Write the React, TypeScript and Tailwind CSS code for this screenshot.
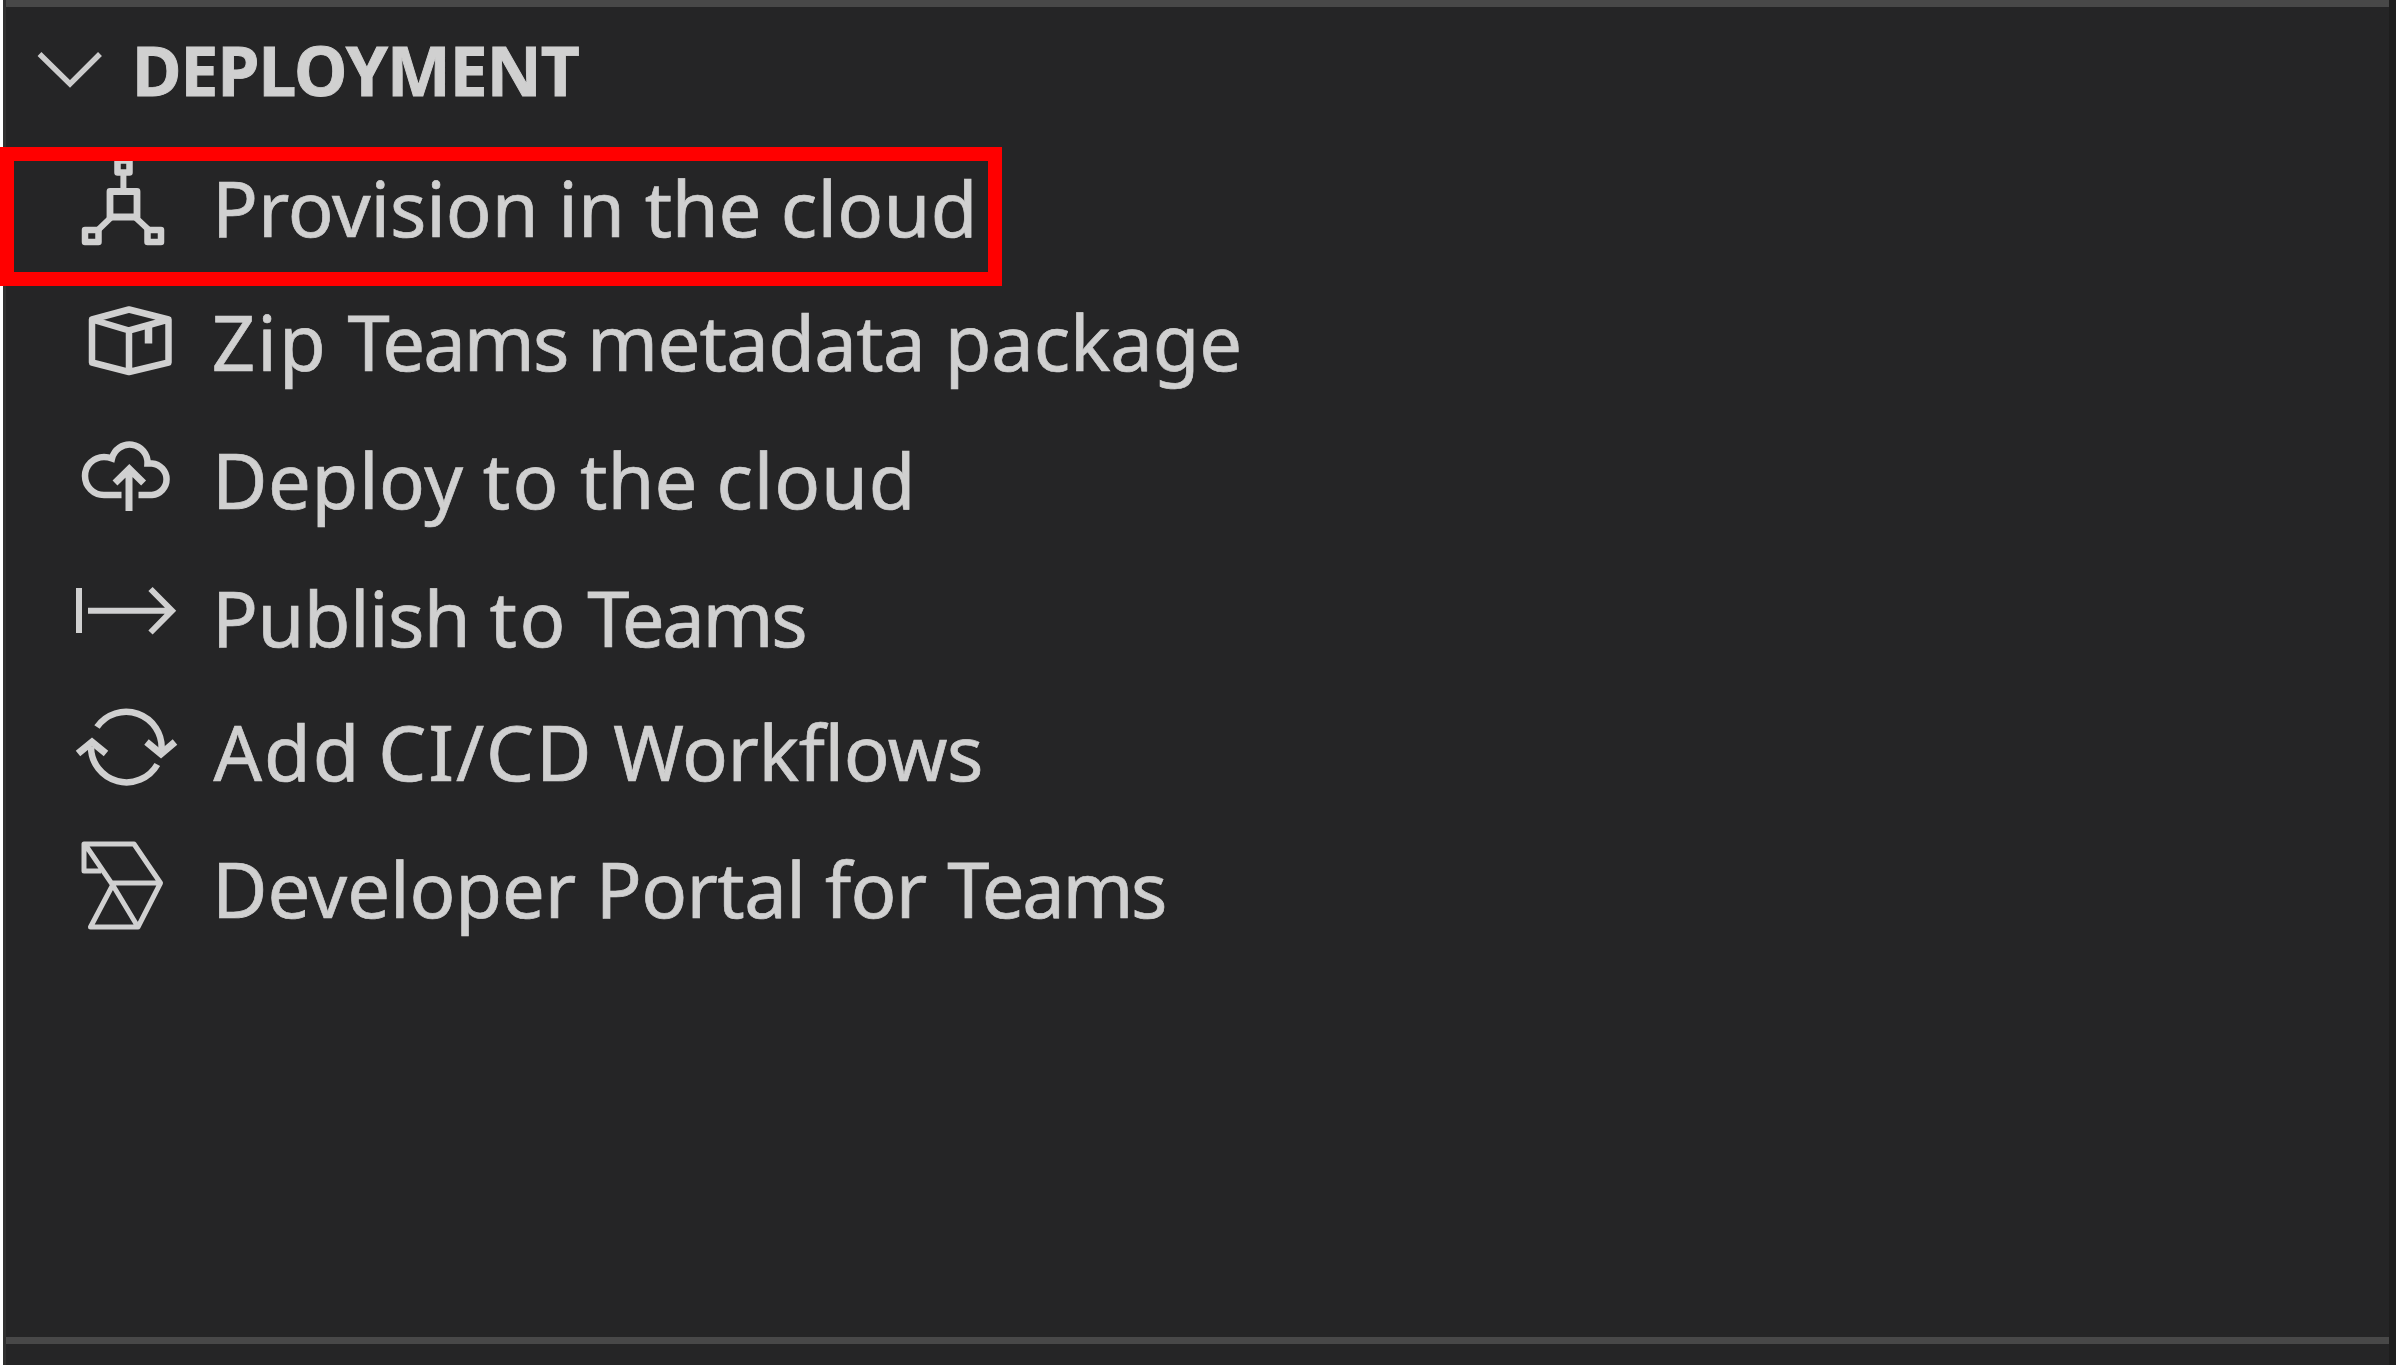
import { ReactNode } from "react";

type Word = { text: string; tracking?: string };

type Action = {
  words: Word[];
  height: string;
  spacing: string;
  viewBox: string;
  icon: ReactNode;
};

const actions: Action[] = [
  {
    words: [
      { text: "Provision", tracking: "tracking-[-0.1px]" },
      { text: "in" },
      { text: "the", tracking: "tracking-[-0.3px]" },
      { text: "cloud", tracking: "tracking-[0.2px]" },
    ],
    height: "h-[134px]",
    spacing: "ml-[22px]",
    viewBox: "60 141 130 133",
    icon: (
      <>
        <path
          strokeWidth="6.5"
          strokeLinejoin="round"
          d="M117.5 160.5h12v12h-12zM85 230h13.5v12H85zM147.5 230H161v12h-13.5z"
        />
        <path strokeWidth="6.8" strokeLinejoin="round" d="M110 191.5h27V217h-27z" />
        <path strokeWidth="6" d="M123.4 174v16M111.5 217 97 231M135 217l15 14" />
      </>
    ),
  },
  {
    words: [
      { text: "Zip", tracking: "tracking-[2px]" },
      { text: "Teams", tracking: "tracking-[-2px]" },
      { text: "metadata", tracking: "tracking-[-0.7px]" },
      { text: "package", tracking: "tracking-[-0.2px]" },
    ],
    height: "h-[138px]",
    spacing: "ml-[21.8px]",
    viewBox: "60 275 130 133",
    icon: (
      <>
        <path
          strokeWidth="6.5"
          strokeLinejoin="round"
          d="M129 309.5 92 319.5v43l37 9.5 39.5-9.5v-43zM92 319.5l37 11 39.5-11M129 330.5V372"
        />
        <path strokeWidth="7.5" d="M148.5 325v18.5" />
      </>
    ),
  },
  {
    words: [
      { text: "Deploy", tracking: "tracking-[0.6px]" },
      { text: "to", tracking: "tracking-[2.4px]" },
      { text: "the" },
      { text: "cloud", tracking: "tracking-[0.8px]" },
    ],
    height: "h-[138px]",
    spacing: "ml-[22px] [word-spacing:-0.6px]",
    viewBox: "60 413 130 133",
    icon: (
      <>
        <path
          strokeWidth="6.5"
          d="M121.5 495H104a19 19 0 0 1 0-38q4 0 8 1.5a18 18 0 0 1 35.5 5H152a15.8 15.8 0 0 1 0 31.5h-13.5"
        />
        <path strokeWidth="7" d="M129 469v42M115 483l14.3-14 14.3 14" />
      </>
    ),
  },
  {
    words: [
      { text: "Publish", tracking: "tracking-[-0.6px]" },
      { text: "to", tracking: "tracking-[2.4px]" },
      { text: "Teams", tracking: "tracking-[-2.4px]" },
    ],
    height: "h-[134px]",
    spacing: "ml-[22px] [word-spacing:-0.3px]",
    viewBox: "60 551 130 133",
    icon: (
      <path strokeWidth="6" d="M79 588v45M88 610.7h83M150.5 589l21.500 21.700-21.500 21.800" />
    ),
  },
  {
    words: [
      { text: "Add", tracking: "tracking-[2px]" },
      { text: "CI/CD", tracking: "tracking-[1.9px] -ml-[3px]" },
      { text: "Workflows", tracking: "tracking-[-0.4px]" },
    ],
    height: "h-[137px]",
    spacing: "ml-[23.5px]",
    viewBox: "60 685 130 133",
    icon: (
      <>
        <path strokeWidth="6.5" d="M97 727a35.500 35.500 0 0 1 64.500 23M157.300 764.500a35.500 35.500 0 0 1-66.300-17.500" />
        <path strokeWidth="7" d="m146.500 742 14.500 12 14-12M78 753.500l14-11.500 14 11.500" />
      </>
    ),
  },
  {
    words: [
      { text: "Developer", tracking: "tracking-[-0.1px]" },
      { text: "Portal", tracking: "tracking-[-0.6px]" },
      { text: "for", tracking: "tracking-[-0.7px]" },
      { text: "Teams", tracking: "tracking-[-2.4px] ml-[1px]" },
    ],
    height: "h-[134px]",
    spacing: "ml-[22px]",
    viewBox: "60 822 130 133",
    icon: (
      <path
        strokeWidth="5"
        strokeLinejoin="round"
        d="M101 871H84v-27h50l26.500 39L138 927H90.500l22.200-42L85.500 845M112.700 883h47.800M112.700 885 138 927"
      />
    ),
  },
];

function ActionRow({ action }: { action: Action }) {
  return (
    <li className={`flex items-start ${action.height}`}>
      <svg
        viewBox={action.viewBox}
        className="ml-[54px] h-[133px] w-[130px] shrink-0"
        fill="none"
        stroke="#d0d0d0"
      >
        {action.icon}
      </svg>
      <span
        className={`text-[76px] leading-[133px] whitespace-pre [-webkit-text-stroke:0.7px_#d0d0d0] ${action.spacing}`}
      >
        {action.words.map((word, i) => (
          <span key={word.text}>
            {i > 0 && " "}
            <span className={word.tracking}>{word.text}</span>
          </span>
        ))}
      </span>
    </li>
  );
}

export default function App() {
  return (
    <div className="relative flex h-[1365px] w-[2396px] overflow-hidden bg-white pl-[3px] font-['Noto_Sans','Open_Sans',sans-serif] text-[#d0d0d0]">
      <div className="w-[3px] bg-[#303030]" />
      <section className="flex w-[2383px] flex-col bg-[#252526]">
        <div className="h-[6.5px] shrink-0 bg-[#484848]" />
        <header className="mt-[17.5px] flex h-[92px] items-start">
          <svg viewBox="30 24 80 92" className="ml-[24px] h-[92px] w-[80px]" fill="none" stroke="#cccccc">
            <path strokeWidth="5.500" d="m39.500 54 30.500 30 30-30" />
          </svg>
          <h2 className="ml-[22px] text-[67.5px] leading-[92px] font-bold tracking-[-0.9px] [-webkit-text-stroke:0.9px_#d0d0d0]">
            DEPLOYMENT
          </h2>
        </header>
        <ul className="mt-[25px]">
          {actions.map((action) => (
            <ActionRow key={action.viewBox} action={action} />
          ))}
        </ul>
        <div className="mt-auto h-[7px] shrink-0 bg-[#484848]" />
        <div className="h-[21px] shrink-0" />
      </section>
      <div className="flex-1 bg-[#1e1e1e]" />
      <div className="absolute top-[147px] left-0 h-[139px] w-[1002px] border-[14px] border-[#ff0000]" />
    </div>
  );
}
